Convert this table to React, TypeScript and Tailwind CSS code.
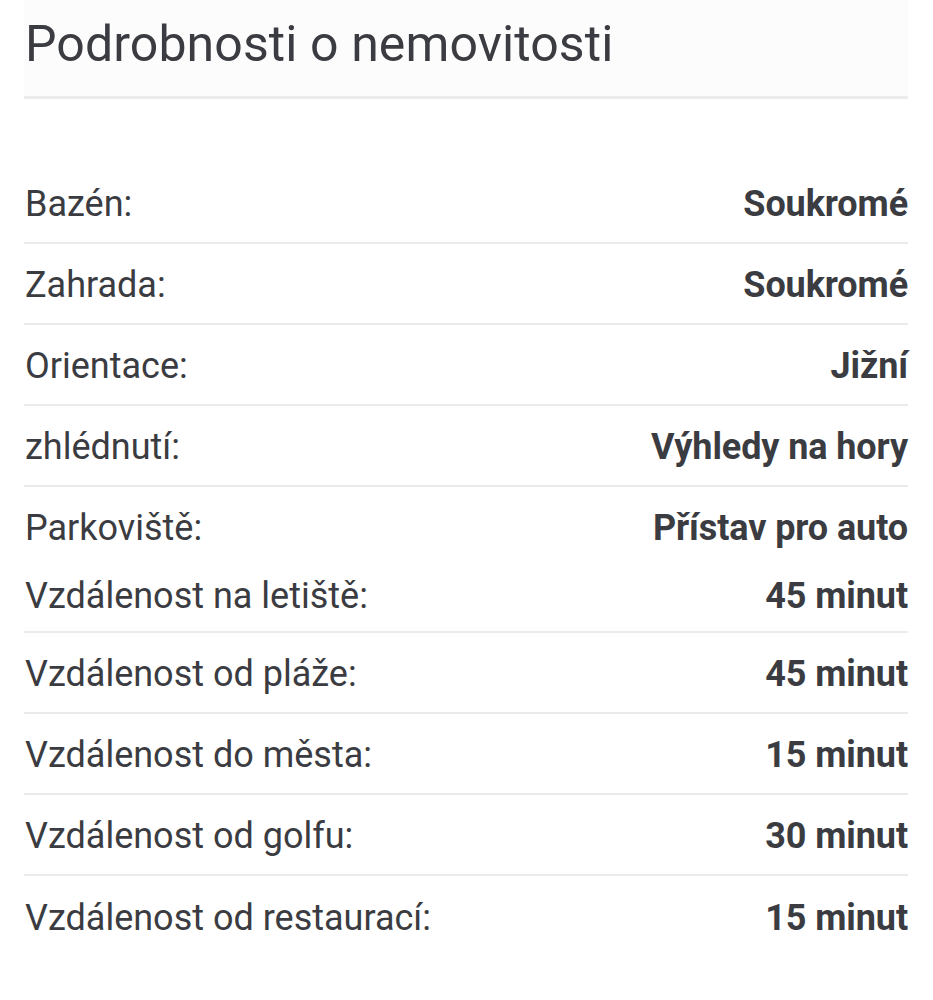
import React from "react";

type Row = { label: string; value: string; cls: string };

const rows: Row[] = [
  { label: "Bazén:", value: "Soukromé", cls: "h-[81px] border-b-2 border-[#ebebeb]" },
  { label: "Zahrada:", value: "Soukromé", cls: "h-[81px] border-b-2 border-[#ebebeb]" },
  { label: "Orientace:", value: "Jižní", cls: "h-[81px] border-b-2 border-[#ebebeb]" },
  { label: "zhlédnutí:", value: "Výhledy na hory", cls: "h-[81px] border-b-2 border-[#ebebeb]" },
  { label: "Parkoviště:", value: "Přístav pro auto", cls: "h-[78px]" },
  { label: "Vzdálenost na letiště:", value: "45 minut", cls: "h-[68px] pb-[8px] border-b-2 border-[#ebebeb]" },
  { label: "Vzdálenost od pláže:", value: "45 minut", cls: "h-[81px] border-b-2 border-[#ebebeb]" },
  { label: "Vzdálenost do města:", value: "15 minut", cls: "h-[81px] border-b-2 border-[#ebebeb]" },
  { label: "Vzdálenost od golfu:", value: "30 minut", cls: "h-[81px] border-b-2 border-[#ebebeb]" },
  { label: "Vzdálenost od restaurací:", value: "15 minut", cls: "h-[81px]" },
];

export default function App() {
  return (
    <div
      className="min-h-[1000px] bg-white pl-[24px] pr-[25px] text-[#3b3c41]"
      style={{ fontFamily: "Roboto, 'Noto Sans', sans-serif" }}
    >
      <div className="flex h-[99px] items-center border-b-[3px] border-[#ececec] bg-[#fcfcfc] pb-[9px]">
        <h1 className="pl-[1px] text-[50px] font-normal leading-none tracking-[0.1px]">
          Podrobnosti o nemovitosti
        </h1>
      </div>
      <div className="mt-[64px]">
        {rows.map((r, i) => (
          <div key={i} className={`flex items-center justify-between ${r.cls}`}>
            <span className="pl-[1px] pt-[3px] text-[36px] leading-none">{r.label}</span>
            <span className="pt-[3px] text-[36px] font-bold leading-none tracking-[-0.1px]">{r.value}</span>
          </div>
        ))}
      </div>
    </div>
  );
}
